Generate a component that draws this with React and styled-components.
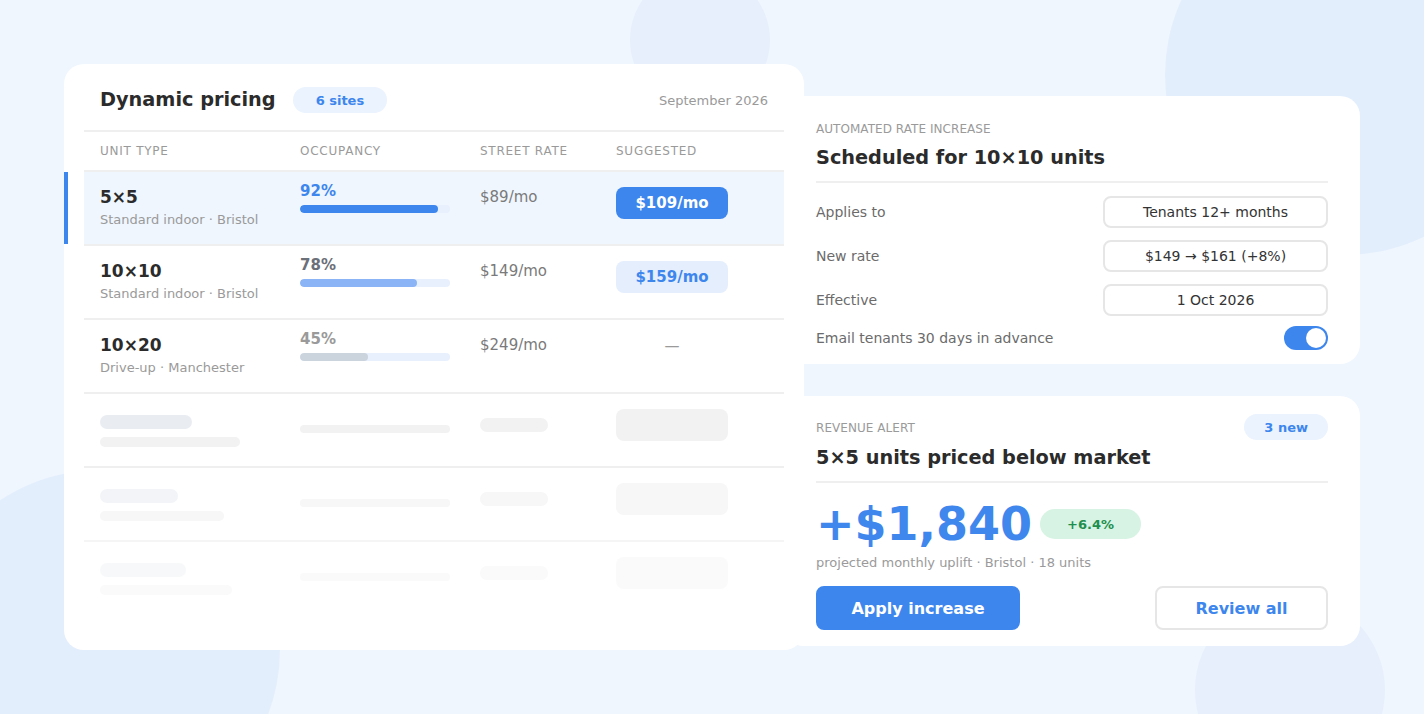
import React from 'react';
import styled, { createGlobalStyle } from 'styled-components';

const GlobalStyle = createGlobalStyle`
  html, body {
    margin: 0;
    padding: 0;
    background: #eff6fe;
  }
  body {
    font-family: "DejaVu Sans", "Noto Sans", sans-serif;
    color: #2b2b2b;
  }
  * { box-sizing: border-box; }
`;

const Page = styled.div`
  position: relative;
  width: 1424px;
  height: 714px;
  overflow: hidden;
  background: #eff6fe;
  display: flex;
  align-items: flex-start;
  padding: 64px;
`;

// decorative background blobs
const Blob = styled.div`
  position: absolute;
  border-radius: 50%;
  background: ${p => p.$color || '#e4eefd'};
  width: ${p => p.$r * 2}px;
  height: ${p => p.$r * 2}px;
  left: ${p => p.$x - p.$r}px;
  top: ${p => p.$y - p.$r}px;
  z-index: 0;
`;

const PricingCard = styled.section`
  position: relative;
  z-index: 1;
  width: 740px;
  height: 586px;
  flex-shrink: 0;
  background: #fff;
  border-radius: 20px;
  padding: 22px 20px 36px;
`;

const CardHead = styled.header`
  display: flex;
  align-items: center;
  padding: 1px 16px 17px;
  border-bottom: 2px solid #efefef;
`;

const Title = styled.h2`
  margin: 0;
  font-size: 19.3px;
  font-weight: 700;
  color: #2b2b2b;
  line-height: 24px;
`;

const Pill = styled.span`
  display: inline-flex;
  align-items: center;
  justify-content: center;
  height: ${p => p.$h || 26}px;
  padding: 0 ${p => p.$pad || 22}px;
  border-radius: ${p => (p.$h || 26) / 2}px;
  background: ${p => p.$bg || '#ebf3fe'};
  color: ${p => p.$fg || '#3d86ed'};
  font-size: 13px;
  font-weight: 700;
  margin-left: ${p => p.$ml || 0}px;
`;

const Month = styled.span`
  margin-left: auto;
  font-size: 13px;
  color: #9a9a9a;
`;

const Grid = styled.div`
  display: grid;
  grid-template-columns: 200px 180px 136px 1fr;
  padding: 0 16px;
  border-bottom: ${p => (p.$last ? 'none' : '2px solid #efefef')};
`;

const HeadRow = styled(Grid)`
  height: 40px;
  align-items: center;
  font-size: 12px;
  color: #9a9a9a;
  letter-spacing: 0.75px;
  text-transform: uppercase;
`;

const Row = styled(Grid)`
  position: relative;
  height: 74px;
  padding-top: 10px;
  align-items: start;
  background: ${p => (p.$active ? '#eff6fe' : 'transparent')};
  opacity: ${p => p.$fade ?? 1};

  ${p => p.$active && `
    &::before {
      content: "";
      position: absolute;
      left: -20px;
      top: 0;
      bottom: 0;
      width: 4px;
      background: #3d86ed;
    }
  `}
`;

const Cell = styled.div`
  display: flex;
  flex-direction: column;
`;

const UnitName = styled.div`
  font-size: 17px;
  font-weight: 700;
  line-height: 30px;
  color: #2b2b2b;
`;

const UnitMeta = styled.div`
  font-size: 13px;
  line-height: 16px;
  color: #9a9a9a;
`;

const Pct = styled.div`
  font-size: 15px;
  font-weight: 700;
  line-height: 18px;
  color: ${p => p.$color};
`;

const Track = styled.div`
  margin-top: 5px;
  width: 150px;
  height: 8px;
  border-radius: 4px;
  background: #e8f0fd;
  overflow: hidden;
`;

const Fill = styled.div`
  height: 100%;
  border-radius: 4px;
  background: ${p => p.$color};
`;

const Rate = styled.div`
  font-size: 15px;
  line-height: 30px;
  color: #7a7a7a;
`;

const Suggest = styled.div`
  margin-top: ${p => (p.$none ? 0 : 5)}px;
  width: 112px;
  height: 32px;
  border-radius: 8px;
  display: flex;
  align-items: center;
  justify-content: center;
  font-size: 15px;
  font-weight: 700;
  background: ${p => (p.$solid ? '#3d86ed' : p.$none ? 'transparent' : '#e4eefd')};
  color: ${p => (p.$solid ? '#fff' : p.$none ? '#9a9a9a' : '#3d86ed')};
  ${p => p.$none && 'font-weight: 400;'}
`;

const Skel = styled.div`
  width: ${p => p.$w}px;
  height: ${p => p.$h}px;
  margin-top: ${p => p.$mt}px;
  border-radius: ${p => p.$rad || p.$h / 2}px;
  background: ${p => p.$bg || '#f2f2f2'};
`;

const SideColumn = styled.div`
  position: relative;
  z-index: 2;
  width: 576px;
  flex-shrink: 0;
  margin-left: -20px;
  margin-top: 32px;
  display: flex;
  flex-direction: column;
  gap: 32px;
`;

const SideCard = styled.section`
  background: #fff;
  border-radius: 20px;
  padding: 18px 32px ${p => p.$pb || 16}px;
`;

const EyebrowRow = styled.div`
  display: flex;
  align-items: center;
  justify-content: space-between;
  height: 26px;
`;

const Eyebrow = styled.span`
  padding-top: ${p => p.$pt ?? 3}px;
  font-size: 12px;
  color: #9a9a9a;
  letter-spacing: 0.05px;
  text-transform: uppercase;
`;

const SideTitle = styled(Title)`
  margin-top: 6px;
  padding-bottom: 11px;
  border-bottom: 2px solid #efefef;
`;

const Fields = styled.div`
  margin-top: 13px;
  display: flex;
  flex-direction: column;
  gap: 12px;
`;

const FieldRow = styled.div`
  display: flex;
  align-items: center;
  justify-content: space-between;
  height: ${p => p.$h || 32}px;
  margin-top: ${p => p.$mt || 0}px;
`;

const Label = styled.span`
  font-size: 14px;
  color: #6b6b6b;
`;

const FieldBox = styled.div`
  width: 225px;
  height: 32px;
  border: 2px solid #e6e6e6;
  border-radius: 8px;
  display: flex;
  align-items: center;
  justify-content: center;
  font-size: 14px;
  color: #333;
`;

const Toggle = styled.div`
  width: 44px;
  height: 24px;
  border-radius: 12px;
  background: #3d86ed;
  padding: 2px;
  display: flex;
  justify-content: ${p => (p.$on ? 'flex-end' : 'flex-start')};
`;

const Knob = styled.div`
  width: 20px;
  height: 20px;
  border-radius: 50%;
  background: #fff;
`;

const BigRow = styled.div`
  margin-top: 18px;
  display: flex;
  align-items: center;
  gap: 8px;
`;

const BigNumber = styled.div`
  font-size: 46px;
  font-weight: 700;
  line-height: 46px;
  color: #3f87ec;
`;

const Caption = styled.div`
  margin-top: 8px;
  font-size: 13px;
  line-height: 16px;
  color: #9a9a9a;
`;

const Actions = styled.div`
  margin-top: 15px;
  display: flex;
  justify-content: space-between;
`;

const Button = styled.button`
  width: ${p => p.$w}px;
  height: 44px;
  border-radius: 8px;
  font-family: inherit;
  font-size: 16px;
  font-weight: 700;
  cursor: pointer;
  border: 2px solid ${p => (p.$primary ? '#3d86ed' : '#e6e6e6')};
  background: ${p => (p.$primary ? '#3d86ed' : '#fff')};
  color: ${p => (p.$primary ? '#fff' : '#3d86ed')};
`;

const units = [
  { name: '5×5', meta: 'Standard indoor · Bristol', pct: 92, pctColor: '#3d86ed', fill: '#3d86ed', rate: '$89/mo', suggest: '$109/mo', solid: true, active: true },
  { name: '10×10', meta: 'Standard indoor · Bristol', pct: 78, pctColor: '#6b7079', fill: '#8ab4f5', rate: '$149/mo', suggest: '$159/mo' },
  { name: '10×20', meta: 'Drive-up · Manchester', pct: 45, pctColor: '#9a9a9a', fill: '#cbd3dd', rate: '$249/mo', suggest: null },
];

const skeletons = [
  { w1: 92, w2: 140, fade: 1, first: '#e9edf2' },
  { w1: 78, w2: 124, fade: 0.6, first: '#e9edf2' },
  { w1: 86, w2: 132, fade: 0.35, first: '#e9edf2' },
];

export default function App() {
  return (
    <>
      <GlobalStyle />
      <Page>
        <Blob $x={700} $y={40} $r={70} $color="#e7effd" />
        <Blob $x={1345} $y={75} $r={180} $color="#e3eefd" />
        <Blob $x={100} $y={650} $r={180} $color="#e3eefd" />
        <Blob $x={1290} $y={690} $r={95} $color="#e7effd" />

        <PricingCard>
          <CardHead>
            <Title>Dynamic pricing</Title>
            <Pill $ml={17} $pad={23}>6 sites</Pill>
            <Month>September 2026</Month>
          </CardHead>
          <HeadRow>
            <span>Unit type</span>
            <span>Occupancy</span>
            <span>Street rate</span>
            <span>Suggested</span>
          </HeadRow>

          {units.map(u => (
            <Row key={u.name} $active={u.active}>
              <Cell>
                <UnitName>{u.name}</UnitName>
                <UnitMeta>{u.meta}</UnitMeta>
              </Cell>
              <Cell>
                <Pct $color={u.pctColor}>{u.pct}%</Pct>
                <Track>
                  <Fill $color={u.fill} style={{ width: `${u.pct}%` }} />
                </Track>
              </Cell>
              <Rate>{u.rate}</Rate>
              {u.suggest ? (
                <Suggest $solid={u.solid}>{u.suggest}</Suggest>
              ) : (
                <Suggest $none>—</Suggest>
              )}
            </Row>
          ))}

          {skeletons.map((s, i) => (
            <Row key={i} $fade={s.fade} $last={i === skeletons.length - 1}>
              <Cell>
                <Skel $w={s.w1} $h={14} $mt={11} $bg={s.first} />
                <Skel $w={s.w2} $h={10} $mt={8} />
              </Cell>
              <Cell>
                <Skel $w={150} $h={8} $mt={21} />
              </Cell>
              <Cell>
                <Skel $w={68} $h={14} $mt={14} />
              </Cell>
              <Cell>
                <Skel $w={112} $h={32} $mt={5} $rad={8} />
              </Cell>
            </Row>
          ))}
        </PricingCard>

        <SideColumn>
          <SideCard $pb={14}>
            <EyebrowRow>
              <Eyebrow>Automated rate increase</Eyebrow>
            </EyebrowRow>
            <SideTitle>Scheduled for 10×10 units</SideTitle>
            <Fields>
              <FieldRow>
                <Label>Applies to</Label>
                <FieldBox>Tenants 12+ months</FieldBox>
              </FieldRow>
              <FieldRow>
                <Label>New rate</Label>
                <FieldBox>$149 → $161 (+8%)</FieldBox>
              </FieldRow>
              <FieldRow>
                <Label>Effective</Label>
                <FieldBox>1 Oct 2026</FieldBox>
              </FieldRow>
              <FieldRow $h={24} $mt={-2}>
                <Label>Email tenants 30 days in advance</Label>
                <Toggle $on>
                  <Knob />
                </Toggle>
              </FieldRow>
            </Fields>
          </SideCard>

          <SideCard>
            <EyebrowRow>
              <Eyebrow $pt={1}>Revenue alert</Eyebrow>
              <Pill $pad={20}>3 new</Pill>
            </EyebrowRow>
            <SideTitle>5×5 units priced below market</SideTitle>
            <BigRow>
              <BigNumber>+$1,840</BigNumber>
              <Pill $bg="#d6f3e3" $fg="#1f8f4e" $pad={27} $h={30}>+6.4%</Pill>
            </BigRow>
            <Caption>projected monthly uplift · Bristol · 18 units</Caption>
            <Actions>
              <Button $primary $w={204}>Apply increase</Button>
              <Button $w={173}>Review all</Button>
            </Actions>
          </SideCard>
        </SideColumn>
      </Page>
    </>
  );
}
